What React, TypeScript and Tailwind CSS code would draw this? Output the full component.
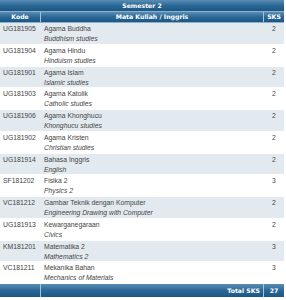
const courses = [
  { kode: "UG181905", nama: "Agama Buddha", eng: "Buddhism studies", sks: 2 },
  { kode: "UG181904", nama: "Agama Hindu", eng: "Hinduism studies", sks: 2 },
  { kode: "UG181901", nama: "Agama Islam", eng: "Islamic studies", sks: 2 },
  { kode: "UG181903", nama: "Agama Katolik", eng: "Catholic studies", sks: 2 },
  { kode: "UG181906", nama: "Agama Khonghucu", eng: "Khonghucu studies", sks: 2 },
  { kode: "UG181902", nama: "Agama Kristen", eng: "Christian studies", sks: 2 },
  { kode: "UG181914", nama: "Bahasa Inggris", eng: "English", sks: 2 },
  { kode: "SF181202", nama: "Fisika 2", eng: "Physics 2", sks: 3 },
  { kode: "VC181212", nama: "Gambar Teknik dengan Komputer", eng: "Engineering Drawing with Computer", sks: 2 },
  { kode: "UG181913", nama: "Kewarganegaraan", eng: "Civics", sks: 2 },
  { kode: "KM181201", nama: "Matematika 2", eng: "Mathematics 2", sks: 3 },
  { kode: "VC181211", nama: "Mekanika Bahan", eng: "Mechanics of Materials", sks: 3 },
];

const head =
  "bg-gradient-to-b from-[#5a8db4] via-[#2a6896] to-[#1b5784] text-white font-bold font-['DejaVu_Sans',sans-serif] text-[6.2px]";

export default function App() {
  return (
    <div className="w-[286px] h-[300px] bg-white text-[6.8px] text-[#444] font-['Liberation_Sans',Arial,sans-serif] pr-[2px]">
      <div className={`${head} h-[12px] flex items-center justify-center border-b border-[#8fb0c9]`}>
        Semester 2
      </div>
      <div className={`${head} h-[11px] grid grid-cols-[41px_1fr_20px] border-b border-[#8fb0c9]`}>
        <div className="flex items-center justify-center border-r border-[#a9c3d6]">Kode</div>
        <div className="flex items-center justify-center border-r border-[#a9c3d6]">Mata Kuliah / Inggris</div>
        <div className="flex items-center justify-center">SKS</div>
      </div>
      {courses.map((c, i) => (
        <div
          key={c.kode}
          className={`grid grid-cols-[41px_1fr_20px] h-[21.75px] pt-[1px] border-b border-white ${i % 2 === 0 ? "bg-[#e3eaef]" : "bg-white"}`}
        >
          <div className="pl-[3px] leading-[10px]">{c.kode}</div>
          <div className="pl-[3px] leading-[10px]">
            <div>{c.nama}</div>
            <div className="italic">{c.eng}</div>
          </div>
          <div className="text-center leading-[10px]">{c.sks}</div>
        </div>
      ))}
      <div className={`${head} h-[13px] grid grid-cols-[41px_1fr_20px]`}>
        <div className="border-r border-[#a9c3d6]" />
        <div className="flex items-center justify-end pr-[3px] border-r border-[#a9c3d6]">Total SKS</div>
        <div className="flex items-center justify-center">27</div>
      </div>
    </div>
  );
}
